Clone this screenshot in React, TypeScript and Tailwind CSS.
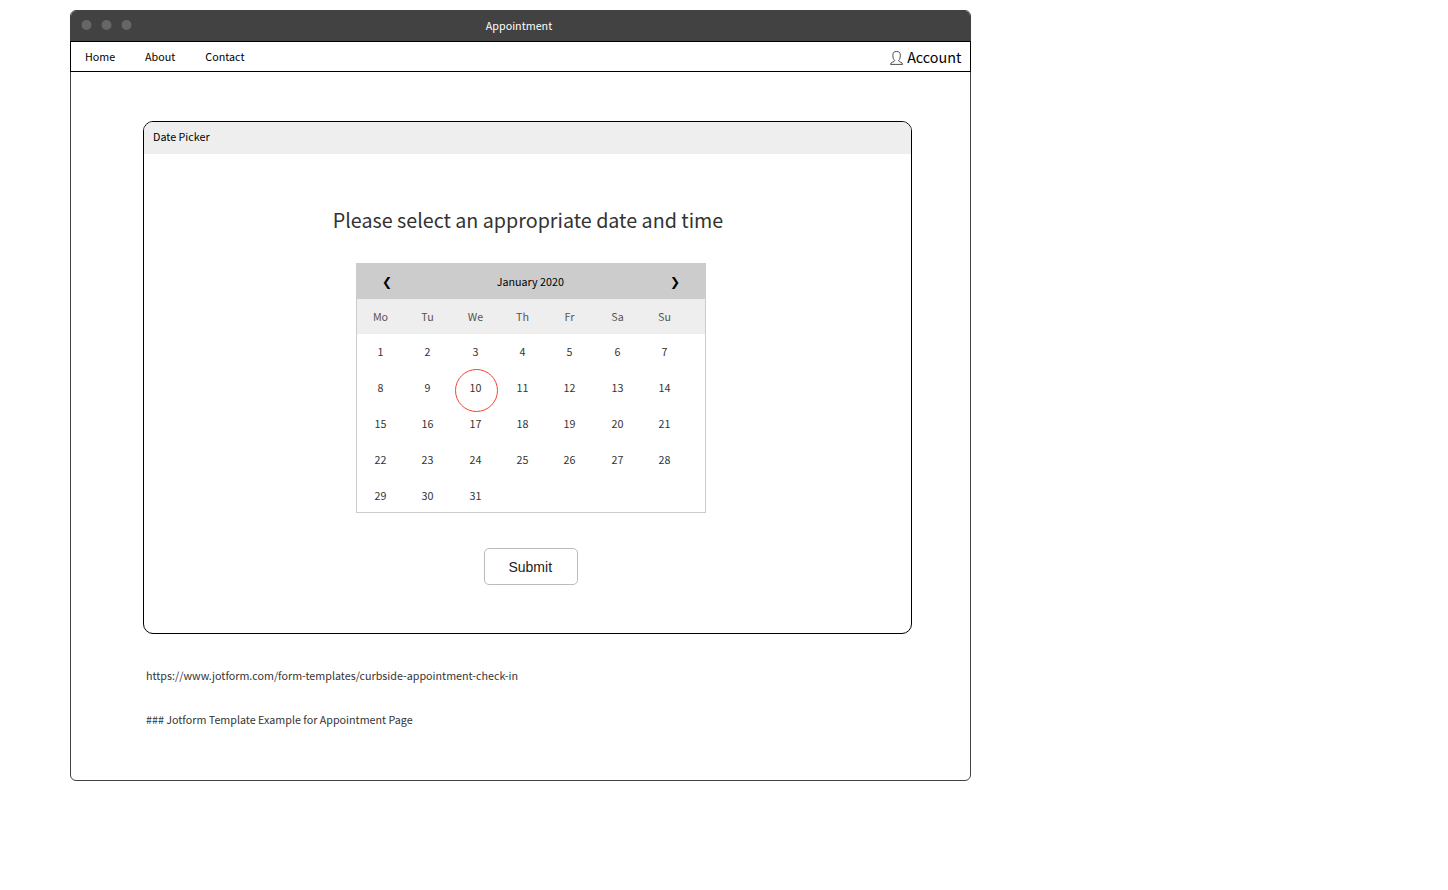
const navItems = [
  { label: "Home", width: "w-[60px]" },
  { label: "About", width: "w-[60.3px]" },
  { label: "Contact", width: "w-[60px]" },
];

const weekdays = ["Mo", "Tu", "We", "Th", "Fr", "Sa", "Su"];
const days = Array.from({ length: 31 }, (_, i) => i + 1);
const selectedDay = 10;

function TitleBar() {
  return (
    <div className="relative flex h-[30px] items-center justify-center bg-[#424242] text-white">
      <svg className="absolute left-[10px] top-[9px]" width="52" height="10" fill="#666666">
        <circle cx="5.5" cy="5" r="5" />
        <circle cx="25.5" cy="5" r="5" />
        <circle cx="45.5" cy="5" r="5" />
      </svg>
      <span className="pr-[3px]">Appointment</span>
    </div>
  );
}

function UserIcon() {
  return (
    <svg className="mt-[2px]" width="14" height="15" viewBox="0 0 14 15" fill="none" stroke="#222222" strokeWidth="0.8" strokeLinejoin="round">
      <path d="M4.6 10.4 C3.6 9.3 2.9 8 2.9 5.2 C2.9 2.6 3.9 1.5 6.6 1.5 C9.3 1.5 10.3 2.6 10.3 5.2 C10.3 8 9.6 9.3 8.6 10.4 C8.4 12.4 12.6 11.6 12.6 14.4 L0.5 14.4 C0.5 11.6 4.8 12.4 4.6 10.4 Z" />
    </svg>
  );
}

function NavBar() {
  return (
    <nav className="-mx-px flex h-[31px] items-center border border-black pl-[14px] pr-[8.7px] text-black">
      {navItems.map((item) => (
        <a key={item.label} className={item.width}>
          {item.label}
        </a>
      ))}
      <div className="ml-auto flex items-center gap-[3.3px] text-[14.33px]">
        <UserIcon />
        <span>Account</span>
      </div>
    </nav>
  );
}

function Calendar() {
  return (
    <div className="ml-[212px] mt-[26px] h-[250px] w-[350px] border border-[#cccccc]">
      <div className="flex h-[35px] items-center justify-between bg-[#cccccc] px-[24px] text-black">
        <span className="w-[12px] text-center font-[DejaVu_Sans] text-[12px]">❮</span>
        <span className="pr-[1.5px]">January 2020</span>
        <span className="w-[12px] text-center font-[DejaVu_Sans] text-[12px]">❯</span>
      </div>
      <div className="grid h-[35px] grid-cols-[47px_47px_49px_45px_49px_47px_47px] items-center bg-[#eeeeee] text-center text-[#555555]">
        {weekdays.map((d) => (
          <span key={d}>{d}</span>
        ))}
      </div>
      <div className="grid auto-rows-[36px] grid-cols-[47px_47px_49px_45px_49px_47px_47px] items-center text-center">
        {days.map((d) => (
          <span key={d} className="relative">
            {d}
            {d === selectedDay && (
              <span className="absolute left-[4px] top-[-11px] size-[43px] rounded-full border border-[#f44336]" />
            )}
          </span>
        ))}
      </div>
    </div>
  );
}

function DatePicker() {
  return (
    <section className="ml-[72px] mt-[49px] h-[513px] w-[769px] overflow-hidden rounded-[10px] border border-black">
      <header className="h-8 bg-[#eeeeee] px-[9px] leading-[30px] text-black">Date Picker</header>
      <h1 className="mt-[49px] pl-px text-center text-[19.7px] leading-[33px]">Please select an appropriate date and time</h1>
      <div className="pt-px">
        <Calendar />
      </div>
      <button className="ml-[340px] mt-[35px] block h-[37px] w-[94px] rounded-[5px] border border-[#bbbbbb] pr-[1.5px] font-[Liberation_Sans] text-[14px] text-[#222222]">
        Submit
      </button>
    </section>
  );
}

export default function App() {
  return (
    <main className="h-[890px] bg-white pl-[70px] pt-[10px] font-['Noto_Sans_CJK_SC',sans-serif] text-[10.745px] leading-[16px] text-[#333333]">
      <div className="h-[771px] w-[901px] rounded-[6px] border border-[#424242]">
        <div className="overflow-hidden rounded-t-[5px]">
          <TitleBar />
        </div>
        <NavBar />
        <DatePicker />
        <p className="ml-[75px] mt-[34px]">https://www.jotform.com/form-templates/curbside-appointment-check-in</p>
        <p className="ml-[75px] mt-[28px]">### Jotform Template Example for Appointment Page</p>
      </div>
    </main>
  );
}
